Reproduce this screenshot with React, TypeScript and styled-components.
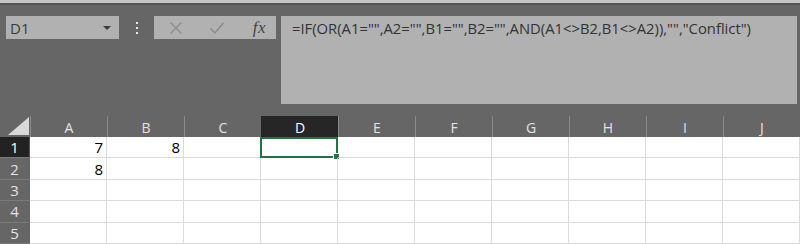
import { Fragment } from 'react';
import styled, { createGlobalStyle } from 'styled-components';

const COLUMNS = ['A', 'B', 'C', 'D', 'E', 'F', 'G', 'H', 'I', 'J'];
const ROWS = [1, 2, 3, 4, 5];

const VALUES: Record<string, string> = {
	A1: '7',
	B1: '8',
	A2: '8'
};

const ACTIVE_COLUMN = 'D';
const ACTIVE_ROW = 1;
const FORMULA = '=IF(OR(A1="",A2="",B1="",B2="",AND(A1<>B2,B1<>A2)),"","Conflict")';

const GlobalStyle = createGlobalStyle`
    html, body {
        margin: 0;
        padding: 0;
        background: #666666;
        overflow: hidden;
    }

    * {
        box-sizing: border-box;
    }
`;

export default function App() {
	return (
		<Window>
			<GlobalStyle/>
			<RibbonEdge/>

			<FormulaBar>
				<NameBox>
					<span>D1</span>
					<DropArrow/>
				</NameBox>

				<Grip>
					<i/><i/><i/>
				</Grip>

				<EditButtons>
					<svg width="14" height="14" viewBox="0 0 14 14">
						<path d="M1.5 1.5 L12.5 12.5 M12.5 1.5 L1.5 12.5" stroke="#8c8c8c" strokeWidth="1.4" fill="none"/>
					</svg>
					<svg width="16" height="14" viewBox="0 0 16 14">
						<path d="M1.5 7.5 L6 12 L14.5 2" stroke="#8c8c8c" strokeWidth="1.6" fill="none"/>
					</svg>
					<FxLabel>fx</FxLabel>
				</EditButtons>

				<FormulaInput>{FORMULA}</FormulaInput>
			</FormulaBar>

			<Sheet>
				<Corner>
					<svg width="21" height="18" viewBox="0 0 21 18">
						<polygon points="21,0 21,18 0,18" fill="#d9d9d9"/>
					</svg>
				</Corner>

				{COLUMNS.map((column) => (
					<ColumnHeader key={column} $active={column === ACTIVE_COLUMN}>
						{column}
					</ColumnHeader>
				))}

				{ROWS.map((row) => (
					<Fragment key={row}>
						<RowHeader $active={row === ACTIVE_ROW}>
							{row}
						</RowHeader>
						{COLUMNS.map((column) => {
							const ref = `${column}${row}`;

							return (
								<Cell key={ref} $selected={column === ACTIVE_COLUMN && row === ACTIVE_ROW}>
									{VALUES[ref]}
								</Cell>
							);
						})}
					</Fragment>
				))}
			</Sheet>
		</Window>
	);
}

const Window = styled.div`
    width: 800px;
    height: 244px;
    display: flex;
    flex-direction: column;
    background: #666666;
    font-family: "Open Sans", "Noto Sans", sans-serif;
`;

const RibbonEdge = styled.div`
    height: 5px;
    flex-shrink: 0;
    background: #c8c6c4;
    border-bottom: 2px solid #555555;
`;

const FormulaBar = styled.div`
    display: flex;
    flex-shrink: 0;
    align-items: flex-start;
    padding: 11px 3px 0 6px;
    height: 111px;
`;

const NameBox = styled.div`
    width: 113px;
    height: 23px;
    background: #b1b1b1;
    display: flex;
    align-items: center;
    justify-content: space-between;
    padding: 0 8px 0 4px;
    color: #3c3c3c;
    font-size: 15px;
`;

const DropArrow = styled.span`
    width: 0;
    height: 0;
    border-left: 4px solid transparent;
    border-right: 4px solid transparent;
    border-top: 4px solid #3c3c3c;
`;

const Grip = styled.div`
    width: 35px;
    height: 23px;
    display: flex;
    flex-direction: column;
    align-items: center;
    justify-content: center;
    gap: 3px;

    i {
        width: 2px;
        height: 2px;
        background: #e6e6e6;
    }
`;

const EditButtons = styled.div`
    width: 122px;
    height: 23px;
    background: #b1b1b1;
    display: flex;
    align-items: center;
    padding: 0 10px 0 15px;
    gap: 26px;
`;

const FxLabel = styled.span`
    font-family: "Liberation Serif", "DejaVu Serif", serif;
    font-style: italic;
    font-size: 17px;
    color: #454545;
    margin-left: 2px;
    letter-spacing: 0.5px;
`;

const FormulaInput = styled.div`
    margin-left: 5px;
    width: 516px;
    height: 88px;
    background: #b1b1b1;
    padding: 2px 0 0 11px;
    color: #333333;
    font-size: 14.8px;
    white-space: nowrap;
`;

const Sheet = styled.div`
    display: grid;
    grid-template-columns: 30px repeat(10, 77px);
    grid-template-rows: 21px repeat(5, 21.4px);
    background: #ffffff;
`;

const Corner = styled.div`
    background: #666666;
    display: flex;
    align-items: flex-end;
    justify-content: flex-end;
    padding: 0 1px 2px 0;
`;

const ColumnHeader = styled.div<{ $active: boolean }>`
    background: ${p => p.$active ? '#262626' : '#666666'};
    color: ${p => p.$active ? '#ffffff' : '#e3e3e3'};
    border-left: 1px solid ${p => p.$active ? '#262626' : '#8a8a8a'};
    display: flex;
    align-items: center;
    justify-content: center;
    font-size: 14px;
    padding-top: 1px;
`;

const RowHeader = styled.div<{ $active: boolean }>`
    background: ${p => p.$active ? '#222222' : '#666666'};
    color: ${p => p.$active ? '#ffffff' : '#e3e3e3'};
    border-bottom: 1px solid #7a7a7a;
    border-right: 1px solid ${p => p.$active ? '#217346' : '#666666'};
    display: flex;
    align-items: center;
    justify-content: center;
    font-size: 15px;
`;

const Cell = styled.div<{ $selected: boolean }>`
    position: relative;
    border-right: 1px solid #dadada;
    border-bottom: 1px solid #dadada;
    display: flex;
    align-items: flex-end;
    justify-content: flex-end;
    padding: 0 3px 0 0;
    color: #000000;
    font-size: 15px;
    line-height: 20px;

    ${p => p.$selected && `
        &::before {
            content: '';
            position: absolute;
            inset: 0 -1px -1px -1px;
            border: 2px solid #217346;
        }

        &::after {
            content: '';
            position: absolute;
            right: -3px;
            bottom: -3px;
            width: 5px;
            height: 5px;
            background: #217346;
            border: 1px solid #ffffff;
        }
    `}
`;
